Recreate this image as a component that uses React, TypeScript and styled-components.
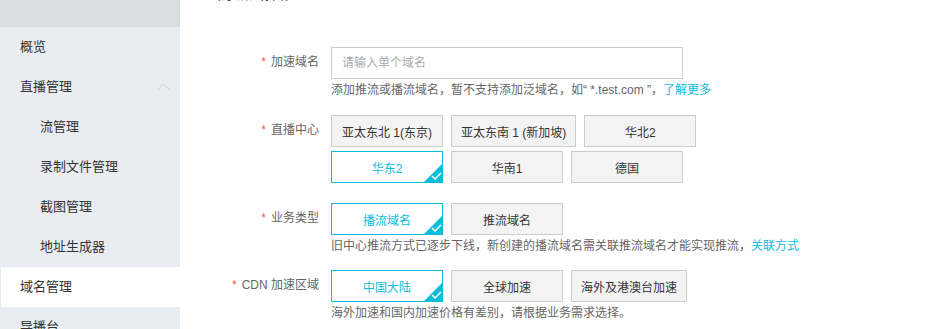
import React from "react";
import styled, { createGlobalStyle } from "styled-components";

const GlobalStyle = createGlobalStyle`
  html, body {
    margin: 0;
    padding: 0;
    background: #fff;
  }
  body {
    font-family: "Liberation Sans", "Noto Sans CJK SC", sans-serif;
    -webkit-font-smoothing: antialiased;
  }
`;

const CYAN = "#0cbcdb";

const Page = styled.div`
  display: flex;
  height: 329px;
  overflow: hidden;
`;

const Sidebar = styled.aside`
  flex: 0 0 180px;
  background: #e9ecf1;
  display: flex;
  flex-direction: column;
`;

const SideTop = styled.div`
  flex-shrink: 0;
  height: 27px;
  background: #d9dee5;
`;

const MenuItem = styled.div<{ $sub?: boolean; $active?: boolean }>`
  display: flex;
  align-items: center;
  justify-content: space-between;
  height: 40px;
  flex-shrink: 0;
  margin-left: 1px;
  padding: 0 10px 0 ${(p) => (p.$sub ? 39 : 19)}px;
  background: ${(p) => (p.$active ? "#fff" : "transparent")};
  color: #333;
  font-size: 13px;
  line-height: 40px;
`;

const Main = styled.main`
  flex: 1;
  padding-left: 25px;
  background: #fff;
`;

const Title = styled.div`
  margin-top: -16px;
  font-size: 16px;
  line-height: 20px;
  color: #333;
`;

const Form = styled.div`
  margin: 43px 0 0 -25px;
`;

const FormItem = styled.div<{ $gap?: number }>`
  display: flex;
  margin-bottom: ${(p) => p.$gap ?? 16}px;
`;

const Label = styled.div`
  flex: 0 0 151px;
  box-sizing: border-box;
  padding-right: 12px;
  text-align: right;
  font-size: 12px;
  line-height: 30px;
  color: #666;
`;

const Star = styled.span`
  color: #f0643c;
  margin-right: 5px;
`;

const Field = styled.div`
  display: flex;
  flex-direction: column;
`;

const Input = styled.input`
  width: 352px;
  height: 32px;
  box-sizing: border-box;
  border: 1px solid #ccc;
  padding: 0 10px;
  font-family: inherit;
  font-size: 12px;
  color: #333;
  outline: none;
  &::placeholder {
    color: #aaa;
  }
`;

const Help = styled.div`
  margin-top: 2px;
  font-size: 12px;
  line-height: 18px;
  color: #666;
`;

const Link = styled.a`
  color: ${CYAN};
  text-decoration: none;
`;

const Choices = styled.div`
  display: flex;
  flex-direction: column;
  gap: 4px;
`;

const ChoiceRow = styled.div`
  display: flex;
  gap: 8px;
`;

const Choice = styled.button<{ $on?: boolean }>`
  position: relative;
  min-width: 112px;
  height: 32px;
  box-sizing: border-box;
  padding: 0 9px;
  border: 1px solid ${(p) => (p.$on ? CYAN : "#ccc")};
  background: ${(p) => (p.$on ? "#fff" : "#f3f3f3")};
  color: ${(p) => (p.$on ? CYAN : "#333")};
  font-family: inherit;
  font-size: 12px;
  cursor: pointer;
`;

const Tick = styled.svg`
  position: absolute;
  right: -1px;
  bottom: -1px;
`;

function Chevron() {
  return (
    <svg width="13" height="8" viewBox="0 0 13 8">
      <polyline points="0.5,7 6.5,1 12.5,7" fill="none" stroke="#c4c8ce" strokeWidth="1" />
    </svg>
  );
}

function Option({ text, on }: { text: string; on?: boolean }) {
  return (
    <Choice $on={on}>
      {text}
      {on && (
        <Tick width="20" height="20" viewBox="0 0 20 20">
          <path d="M20 0 L20 20 L0 20 Z" fill={CYAN} />
          <polyline points="9,13 12,16 18,10" fill="none" stroke="#fff" strokeWidth="1.5" />
        </Tick>
      )}
    </Choice>
  );
}

const menu = [
  { text: "概览" },
  { text: "直播管理", open: true },
  { text: "流管理", sub: true },
  { text: "录制文件管理", sub: true },
  { text: "截图管理", sub: true },
  { text: "地址生成器", sub: true },
  { text: "域名管理", active: true },
  { text: "导播台" },
];

export default function App() {
  return (
    <>
      <GlobalStyle />
      <Page>
        <Sidebar>
          <SideTop />
          {menu.map((m) => (
            <MenuItem key={m.text} $sub={m.sub} $active={m.active}>
              <span>{m.text}</span>
              {m.open && <Chevron />}
            </MenuItem>
          ))}
        </Sidebar>
        <Main>
          <Title>（添加域名）</Title>
          <Form>
            <FormItem>
              <Label>
                <Star>*</Star>加速域名
              </Label>
              <Field>
                <Input placeholder="请输入单个域名" />
                <Help>
                  添加推流或播流域名，暂不支持添加泛域名，如“ *.test.com ”，<Link>了解更多</Link>
                </Help>
              </Field>
            </FormItem>
            <FormItem $gap={20}>
              <Label>
                <Star>*</Star>直播中心
              </Label>
              <Choices>
                <ChoiceRow>
                  <Option text="亚太东北 1(东京)" />
                  <Option text="亚太东南 1 (新加坡)" />
                  <Option text="华北2" />
                </ChoiceRow>
                <ChoiceRow>
                  <Option text="华东2" on />
                  <Option text="华南1" />
                  <Option text="德国" />
                </ChoiceRow>
              </Choices>
            </FormItem>
            <FormItem $gap={15}>
              <Label>
                <Star>*</Star>业务类型
              </Label>
              <Field>
                <ChoiceRow>
                  <Option text="播流域名" on />
                  <Option text="推流域名" />
                </ChoiceRow>
                <Help>
                  旧中心推流方式已逐步下线，新创建的播流域名需关联推流域名才能实现推流，<Link>关联方式</Link>
                </Help>
              </Field>
            </FormItem>
            <FormItem>
              <Label>
                <Star>*</Star>CDN 加速区域
              </Label>
              <Field>
                <ChoiceRow>
                  <Option text="中国大陆" on />
                  <Option text="全球加速" />
                  <Option text="海外及港澳台加速" />
                </ChoiceRow>
                <Help>海外加速和国内加速价格有差别，请根据业务需求选择。</Help>
              </Field>
            </FormItem>
          </Form>
        </Main>
      </Page>
    </>
  );
}
